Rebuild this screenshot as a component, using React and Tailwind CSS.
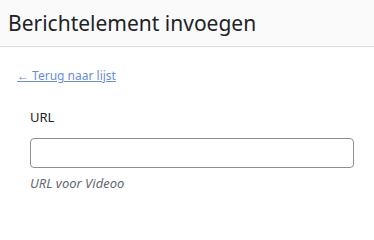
export default function App() {
  return (
    <div
      className="w-[374px] h-[206px] bg-white overflow-hidden"
      style={{ fontFamily: '"Noto Sans", "Open Sans", sans-serif' }}
    >
      <div className="h-[47px] bg-[#fafafa] border-b border-[#dcdcde] flex items-center px-2">
        <h1 className="text-[21px] leading-none text-[#1d2327] pt-[1px]">Berichtelement invoegen</h1>
      </div>

      <div className="pl-[17px] pt-[15px]">
        <a href="#" className="text-[12px] leading-[16px] text-[#6b8cd6] underline">
          ← Terug naar lijst
        </a>
      </div>

      <div className="px-[30px] pr-[20px] pt-[23px]">
        <label className="block text-[13px] leading-[16px] text-[#1d2327]">URL</label>
        <input
          type="text"
          className="mt-[13px] block w-[324px] h-[30px] rounded-[4px] border border-[#8c8f94] bg-white"
        />
        <p className="mt-[7px] text-[13px] leading-[16px] italic text-[#646970]">URL voor Videoo</p>
      </div>
    </div>
  );
}
